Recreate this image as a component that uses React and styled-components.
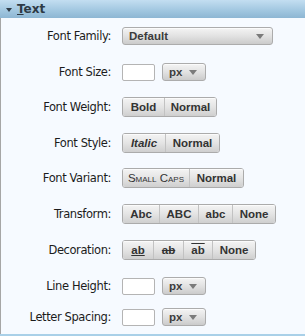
import styled, { createGlobalStyle } from 'styled-components'

const GlobalStyle = createGlobalStyle`
  html, body {
    margin: 0;
    padding: 0;
    background: #ffffff;
  }
  body {
    font-family: "DejaVu Sans", "Liberation Sans", sans-serif;
  }
`

const Panel = styled.div`
  width: 305px;
  height: 336px;
  box-sizing: border-box;
  background: #f6faff;
  border-bottom: 2px solid #a9d0e8;
  display: flex;
  flex-direction: column;
`

const Header = styled.div`
  height: 18px;
  display: flex;
  align-items: center;
  padding-left: 6px;
  background: linear-gradient(to bottom, #c3def1 0%, #a3c8e1 55%, #8db6d3 100%);
  color: #2e3a45;
  font-size: 12px;
  font-weight: 700;
`

const Caret = styled.span`
  width: 0;
  height: 0;
  border-left: 3.5px solid transparent;
  border-right: 3.5px solid transparent;
  border-top: 4px solid #2f3b46;
  margin-right: 5px;
  margin-top: 1px;
`

const Body = styled.div`
  flex: 1;
  border-left: 1px solid #a6a6a6;
  padding-top: 9px;
  display: flex;
  flex-direction: column;
`

const Row = styled.div`
  display: flex;
  align-items: center;
  margin-top: ${p => p.$mt || 0}px;
`

const Label = styled.label`
  width: 110px;
  text-align: right;
  padding-right: 11px;
  font-size: 11.5px;
  letter-spacing: -0.4px;
  color: #1c1c1c;
  white-space: nowrap;
`

const Select = styled.div`
  width: ${p => p.$w}px;
  height: ${p => p.$h || 18}px;
  box-sizing: border-box;
  border: 1px solid #acacac;
  border-radius: 3px;
  background: linear-gradient(to bottom, #f4f4f4 0%, #e2e2e2 50%, #cbcbcb 100%);
  box-shadow: inset 0 1px 0 #fbfbfb;
  display: flex;
  align-items: center;
  justify-content: space-between;
  padding: 0 8px 0 6px;
  font-family: "Liberation Sans", sans-serif;
  font-size: 11.5px;
  font-weight: 700;
  color: #3c3c3c;
  margin-left: ${p => p.$ml || 0}px;
`

const Arrow = styled.span`
  width: 0;
  height: 0;
  border-left: 4.5px solid transparent;
  border-right: 4.5px solid transparent;
  border-top: 5px solid #7b7b7b;
`

const TextBox = styled.div`
  width: 33px;
  height: 17px;
  box-sizing: border-box;
  border: 1px solid #b4b4b4;
  border-radius: 2px;
  background: #fff;
`

const Group = styled.div`
  display: flex;
  height: 20px;
  box-sizing: border-box;
  border: 1px solid #ababab;
  border-radius: 3px;
  overflow: hidden;
`

const Btn = styled.div`
  width: ${p => p.$w}px;
  box-sizing: border-box;
  display: flex;
  align-items: center;
  justify-content: center;
  background: linear-gradient(to bottom, #f4f4f4 0%, #e4e4e4 50%, #cfcfcf 100%);
  box-shadow: inset 0 1px 0 #fbfbfb;
  font-family: "Liberation Sans", sans-serif;
  font-size: 11.5px;
  font-weight: ${p => (p.$caps ? 400 : 700)};
  color: #333;
  font-style: ${p => (p.$italic ? 'italic' : 'normal')};
  font-variant: ${p => (p.$caps ? 'small-caps' : 'normal')};
  text-decoration: ${p => p.$deco || 'none'};
  & + & {
    border-left: 1px solid #c2c2c2;
  }
`

const rows = [
  { label: 'Font Weight:', mt: 16, btns: [{ t: 'Bold', w: 41 }, { t: 'Normal', w: 52 }] },
  { label: 'Font Style:', mt: 16, btns: [{ t: 'Italic', w: 42, italic: true }, { t: 'Normal', w: 54 }] },
  { label: 'Font Variant:', mt: 15, btns: [{ t: 'Small Caps', w: 66, caps: true }, { t: 'Normal', w: 54 }] },
  {
    label: 'Transform:',
    mt: 16,
    btns: [{ t: 'Abc', w: 36 }, { t: 'ABC', w: 39 }, { t: 'abc', w: 34 }, { t: 'None', w: 43 }],
  },
  {
    label: 'Decoration:',
    mt: 16,
    btns: [
      { t: 'ab', w: 30, deco: 'underline' },
      { t: 'ab', w: 30, deco: 'line-through' },
      { t: 'ab', w: 29, deco: 'overline' },
      { t: 'None', w: 43 },
    ],
  },
]

const UnitRow = ({ label, mt }) => (
  <Row $mt={mt}>
    <Label>{label}</Label>
    <TextBox />
    <Select $w={44} $h={18} $ml={7}>
      px <Arrow />
    </Select>
  </Row>
)

const App = () => {
  return (
    <Panel>
      <GlobalStyle />
      <Header>
        <Caret />
        <span>
          <u>T</u>ext
        </span>
      </Header>
      <Body>
        <Row>
          <Label>Font Family:</Label>
          <Select $w={151}>
            Default <Arrow />
          </Select>
        </Row>
        <UnitRow label="Font Size:" mt={18} />
        {rows.map(r => (
          <Row key={r.label} $mt={r.mt}>
            <Label>{r.label}</Label>
            <Group>
              {r.btns.map((b, i) => (
                <Btn key={i} $w={b.w} $italic={b.italic} $caps={b.caps} $deco={b.deco}>
                  {b.t}
                </Btn>
              ))}
            </Group>
          </Row>
        ))}
        <UnitRow label="Line Height:" mt={17} />
        <UnitRow label="Letter Spacing:" mt={13} />
      </Body>
    </Panel>
  )
}

export default App
